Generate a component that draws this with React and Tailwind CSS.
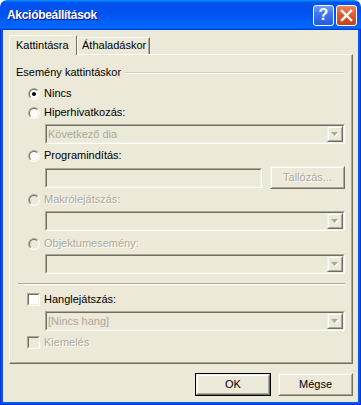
import React from 'react';

// Windows XP "Akcióbeállítások" dialog

const GRAY_TEXT = 'text-[#ACA899] [text-shadow:1px_1px_0_#fff]';

const Sunken = ({ className = '', fill = 'bg-[#ECE9D8]', children }) => (
  <div className={`border border-t-[#ACA899] border-l-[#ACA899] border-r-white border-b-white ${className}`}>
    <div className={`h-full border border-t-[#716F64] border-l-[#716F64] border-r-[#F1EFE2] border-b-[#F1EFE2] ${fill}`}>
      {children}
    </div>
  </div>
);

const Raised = ({ className = '', children }) => (
  <div className={`border border-t-[#F1EFE2] border-l-[#F1EFE2] border-r-[#716F64] border-b-[#716F64] ${className}`}>
    <div className="h-full border border-t-white border-l-white border-r-[#ACA899] border-b-[#ACA899] flex items-center justify-center">
      {children}
    </div>
  </div>
);

const Arrow = () => (
  <svg width="8" height="5" viewBox="0 0 8 5">
    <polygon points="1,1 8,1 4.5,5" fill="#fff" />
    <polygon points="0,0 7,0 3.5,4" fill="#ACA899" />
  </svg>
);

const Combo = ({ text }) => (
  <Sunken className="h-[20px]">
    <div className="flex h-full items-center">
      <span className="flex-1 pl-[1px] text-[#ACA899] leading-[13px]">{text}</span>
      <Raised className="w-[16px] h-full">
        <Arrow />
      </Raised>
    </div>
  </Sunken>
);

const Radio = ({ checked, disabled }) => (
  <div className="w-[12px] h-[12px] rounded-full border border-t-[#ACA899] border-l-[#ACA899] border-r-white border-b-white">
    <div
      className={`h-full rounded-full border border-t-[#716F64] border-l-[#716F64] border-r-[#F1EFE2] border-b-[#F1EFE2] flex items-center justify-center ${
        disabled ? 'bg-[#ECE9D8]' : 'bg-white'
      }`}
    >
      {checked && <div className="w-[4px] h-[4px] rounded-full bg-black" />}
    </div>
  </div>
);

const Check = ({ disabled }) => (
  <Sunken className="w-[13px] h-[13px]" fill={disabled ? 'bg-[#ECE9D8]' : 'bg-white'} />
);

const Option = ({ label, checked, disabled, className = '' }) => (
  <div className={`flex items-center h-[13px] pl-[12px] gap-[4px] ${className}`}>
    <Radio checked={checked} disabled={disabled} />
    <span className={`leading-[13px] ${disabled ? GRAY_TEXT : 'text-black'}`}>{label}</span>
  </div>
);

export default function App() {
  return (
    <div className="w-[361px] h-[405px] flex flex-col font-['Liberation_Sans',Arial,sans-serif] text-[11px] select-none">
      {/* Title bar */}
      <div className="h-[30px] rounded-t-[7px] bg-[linear-gradient(180deg,#0997ff_0%,#0053ee_8%,#0050ee_40%,#0066ff_88%,#0066ff_93%,#005bff_95%,#003dd7_96%,#003dd7_100%)] flex items-center pl-[7px] pr-[4px] gap-[2px]">
        <span className="flex-1 text-white font-bold text-[12px] tracking-[-0.3px] [text-shadow:1px_1px_0_#0f1089]">
          Akcióbeállítások
        </span>
        <div className="w-[21px] h-[21px] rounded-[3px] border border-white bg-[linear-gradient(180deg,#6d9cf7_0%,#3d74ef_45%,#2558e0_100%)] flex items-center justify-center text-white font-bold text-[16px] leading-none">
          ?
        </div>
        <div className="w-[21px] h-[21px] rounded-[3px] border border-white bg-[linear-gradient(180deg,#e9865f_0%,#e05a31_45%,#c8401a_100%)] flex items-center justify-center">
          <svg width="13" height="13" viewBox="0 0 13 13">
            <path d="M2 2 L11 11 M11 2 L2 11" stroke="#fff" strokeWidth="2.4" strokeLinecap="square" />
          </svg>
        </div>
      </div>

      {/* Window body */}
      <div className="flex-1 flex bg-[#0758EA] border-x border-b border-[#0831D9] px-[2px] pb-[2px]">
        <div className="flex-1 bg-[#ECE9D8] flex flex-col pt-[5px] pl-[6px] pr-[5px]">
          {/* Tabs */}
          <div className="flex items-end h-[19px]">
            <div className="relative z-10 h-[20px] -mb-[1px] w-[68px] bg-[#ECE9D8] border-l border-t border-r border-l-white border-t-white border-r-[#716F64] pl-[6px] pt-[3px] leading-[13px]">
              Kattintásra
            </div>
            <div className="h-[17px] w-[73px] border-l border-t border-r border-l-white border-t-white border-r-[#716F64] shadow-[inset_-1px_0_0_#ACA899] pl-[4px] pt-[1px] leading-[13px]">
              Áthaladáskor
            </div>
          </div>

          {/* Tab panel */}
          <div className="h-[310px] border border-t-white border-l-white border-r-[#716F64] border-b-[#716F64] shadow-[inset_-1px_-1px_0_#ACA899] flex flex-col pl-[6px] pr-[7px]">
            <div className="mt-[11px] flex items-center h-[13px]">
              <span className="leading-[13px]">Esemény kattintáskor</span>
              <div className="flex-1 ml-[4px] mr-[1px] border-t border-t-[#D0D0BF] border-b border-b-white" />
            </div>

            <Option className="mt-[8px]" label="Nincs" checked />
            <Option className="mt-[6px]" label="Hiperhivatkozás:" />
            <div className="mt-[5px] ml-[29px]">
              <Combo text="Következő dia" />
            </div>

            <Option className="mt-[5px]" label="Programindítás:" />
            <div className="mt-[4px] ml-[29px] flex items-center gap-[8px] h-[23px]">
              <Sunken className="flex-1 h-[20px]" />
              <Raised className="w-[75px] h-[23px]">
                <span className={GRAY_TEXT}>Tallózás...</span>
              </Raised>
            </div>

            <Option className="mt-[4px]" label="Makrólejátszás:" disabled />
            <div className="mt-[5px] ml-[29px]">
              <Combo text="" />
            </div>

            <Option className="mt-[6px]" label="Objektumesemény:" disabled />
            <div className="mt-[4px] ml-[29px]">
              <Combo text="" />
            </div>

            <div className="mt-[9px] ml-[2px] border-t border-t-[#ACA899] border-b border-b-white" />

            <div className="mt-[8px] flex items-center h-[13px] pl-[11px] gap-[4px]">
              <Check />
              <span className="leading-[13px]">Hanglejátszás:</span>
            </div>
            <div className="mt-[5px] ml-[29px]">
              <Combo text="[Nincs hang]" />
            </div>
            <div className="mt-[5px] flex items-center h-[13px] pl-[11px] gap-[4px]">
              <Check disabled />
              <span className={`leading-[13px] ${GRAY_TEXT}`}>Kiemelés</span>
            </div>
          </div>

          {/* Buttons */}
          <div className="mt-[9px] flex justify-end gap-[7px]">
            <div className="w-[76px] h-[23px] border border-black">
              <Raised className="h-full">OK</Raised>
            </div>
            <Raised className="w-[75px] h-[23px]">Mégse</Raised>
          </div>
        </div>
      </div>
    </div>
  );
}
